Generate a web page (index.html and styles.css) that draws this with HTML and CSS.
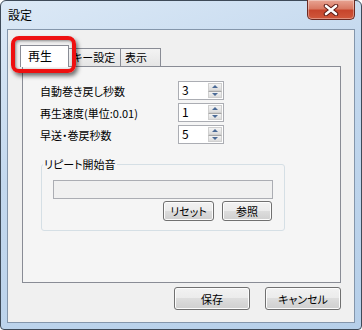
FILE: index.html
```html
<!DOCTYPE html>
<html lang="ja">
<head>
    <meta charset="UTF-8">
    <title>設定</title>
    <link rel="stylesheet" href="styles.css">
</head>
<body>

    <div class="window">
        <div class="titlebar">
            <span class="title">設定</span>
            <button class="close">
                <svg width="16" height="12" viewBox="0 0 16 12">
                    <path d="M3 2 L13 10 M13 2 L3 10" stroke="#5a1a14" stroke-width="4.5" stroke-linecap="round"/>
                    <path d="M3 2 L13 10 M13 2 L3 10" stroke="#fff" stroke-width="2.6" stroke-linecap="round"/>
                </svg>
            </button>
        </div>

        <div class="client">
            <div class="tabs">
                <div class="tab active">再生</div>
                <div class="tab">キー設定</div>
                <div class="tab">表示</div>
            </div>

            <div class="panel">
                <div class="row">
                    <label>自動巻き戻し秒数</label>
                    <div class="spin"><span class="value">3</span><span class="arrows"><i class="up"></i><i class="down"></i></span></div>
                </div>
                <div class="row">
                    <label>再生速度(単位:0.01)</label>
                    <div class="spin"><span class="value">1</span><span class="arrows"><i class="up"></i><i class="down"></i></span></div>
                </div>
                <div class="row">
                    <label>早送・巻戻秒数</label>
                    <div class="spin"><span class="value">5</span><span class="arrows"><i class="up"></i><i class="down"></i></span></div>
                </div>

                <fieldset class="group">
                    <legend>リピート開始音</legend>
                    <div class="path"></div>
                    <div class="group-buttons">
                        <button class="btn small reset">リセット</button>
                        <button class="btn small">参照</button>
                    </div>
                </fieldset>
            </div>

            <div class="footer">
                <button class="btn">保存</button>
                <button class="btn">キャンセル</button>
            </div>
        </div>

        <!-- 赤い強調枠 -->
        <div class="highlight"></div>
    </div>

</body>
</html>
```

FILE: styles.css
```css
body {
    margin: 0;
    font-family: "Noto Sans CJK JP", sans-serif;
    font-size: 11px;
    font-feature-settings: "palt";
    color: #000;
    background: #fff;
}

.window {
    position: relative;
    box-sizing: border-box;
    width: 362px;
    height: 330px;
    padding: 0 6px 6px;
    border: 1px solid #3e4a58;
    border-radius: 6px 6px 4px 4px;
    background: linear-gradient(160deg, #dce9f6 0%, #c3d8ee 40%, #b6cfe9 100%);
}

.titlebar {
    display: flex;
    justify-content: space-between;
    align-items: center;
    height: 28px;
    padding-left: 1px;
}

.title {
    font-size: 12px;
    line-height: 14px;
}

.close {
    align-self: flex-start;
    margin-top: -1px;
    width: 48px;
    height: 20px;
    padding: 0;
    display: flex;
    align-items: center;
    justify-content: center;
    border: 1px solid #6b2a22;
    border-top: none;
    border-radius: 0 0 5px 5px;
    background: linear-gradient(#e8a493 0%, #d97a64 45%, #c7452c 55%, #d0583c 100%);
    box-shadow: inset 0 0 0 1px rgba(255, 255, 255, 0.35);
}

.client {
    box-sizing: border-box;
    height: 294px;
    border: 1px solid #8496ab;
    background: #f0f0f0;
}

.tabs {
    display: flex;
    align-items: flex-end;
    height: 21px;
    margin: 15px 0 0 12px;
    position: relative;
    z-index: 1;
}

.tab {
    box-sizing: border-box;
    height: 18px;
    padding-left: 3px;
    line-height: 16px;
    white-space: nowrap;
    border: 1px solid #898c95;
    border-bottom: none;
    background: linear-gradient(#f3f3f3, #e5e5e5);
    margin-left: -1px;
}

.tab:nth-child(2) {
    width: 53px;
    margin-left: -1px;
}

.tab:nth-child(3) {
    width: 41px;
    padding-left: 4px;
}

.tab.active {
    width: 49px;
    height: 22px;
    margin: 0 0 -1px 0;
    padding-left: 7px;
    line-height: 19px;
    font-size: 12px;
    background: #fff;
    position: relative;
    z-index: 2;
}

.panel {
    box-sizing: border-box;
    width: 319px;
    height: 217px;
    margin-left: 14px;
    padding: 14px 0 0 17px;
    border: 1px solid #898c95;
    background: #f5f5f5;
}

.row {
    display: flex;
    align-items: center;
    height: 19px;
    margin-bottom: 3px;
}

.row label {
    width: 138px;
}

.spin {
    box-sizing: border-box;
    display: flex;
    width: 46px;
    height: 19px;
    border: 1px solid #abadb3;
    background: #fff;
}

.spin .value {
    flex: 1;
    padding-left: 3px;
    line-height: 16px;
    font-size: 12px;
}

.arrows {
    display: flex;
    flex-direction: column;
    width: 14px;
    margin: 1px 1px 1px 0;
}

.arrows i {
    flex: 1;
    display: flex;
    align-items: center;
    justify-content: center;
    background: linear-gradient(#f4f4f4, #dcdcdc);
    border: 1px solid #cfcfcf;
}

.arrows i + i {
    border-top-color: #a8a8a8;
}

.arrows .up::after {
    content: "";
    border: 3px solid transparent;
    border-bottom: 3px solid #4b6a96;
    border-top: none;
}

.arrows .down::after {
    content: "";
    border: 3px solid transparent;
    border-top: 3px solid #4b6a96;
    border-bottom: none;
}

.group {
    box-sizing: border-box;
    width: 244px;
    margin: 13px 0 0 1px;
    padding: 9px 0 9px 0;
    border: 1px solid #d5dfe5;
    border-radius: 3px;
}

.group legend {
    margin-left: 1px;
    padding: 0 1px;
    line-height: 14px;
}

.path {
    box-sizing: border-box;
    width: 220px;
    height: 19px;
    margin-left: 11px;
    border: 1px solid #abadb3;
    background: #f0f0f0;
}

.group-buttons {
    display: flex;
    justify-content: flex-end;
    gap: 8px;
    width: 230px;
    margin: 2px 0 0 0;
}

.btn {
    box-sizing: border-box;
    width: 76px;
    height: 23px;
    padding: 0;
    font: inherit;
    font-feature-settings: "palt";
    color: #000;
    border: 1px solid #707070;
    border-radius: 3px;
    background: linear-gradient(#f2f2f2 0%, #ebebeb 49%, #dddddd 50%, #cfcfcf 100%);
    box-shadow: inset 0 0 0 1px #fcfcfc;
}

.btn.small {
    width: 50px;
    height: 20px;
}

.btn.reset {
    width: 51px;
}

.footer {
    display: flex;
    justify-content: flex-end;
    gap: 15px;
    margin-top: 4px;
    padding-right: 13px;
}

.highlight {
    position: absolute;
    left: 10px;
    top: 35px;
    width: 65px;
    height: 37px;
    box-sizing: border-box;
    border: 4px solid #ee1010;
    border-radius: 8px;
    box-shadow: 2px 3px 4px rgba(0, 0, 0, 0.55), inset 1px 1px 3px rgba(0, 0, 0, 0.45);
    z-index: 5;
}
```
